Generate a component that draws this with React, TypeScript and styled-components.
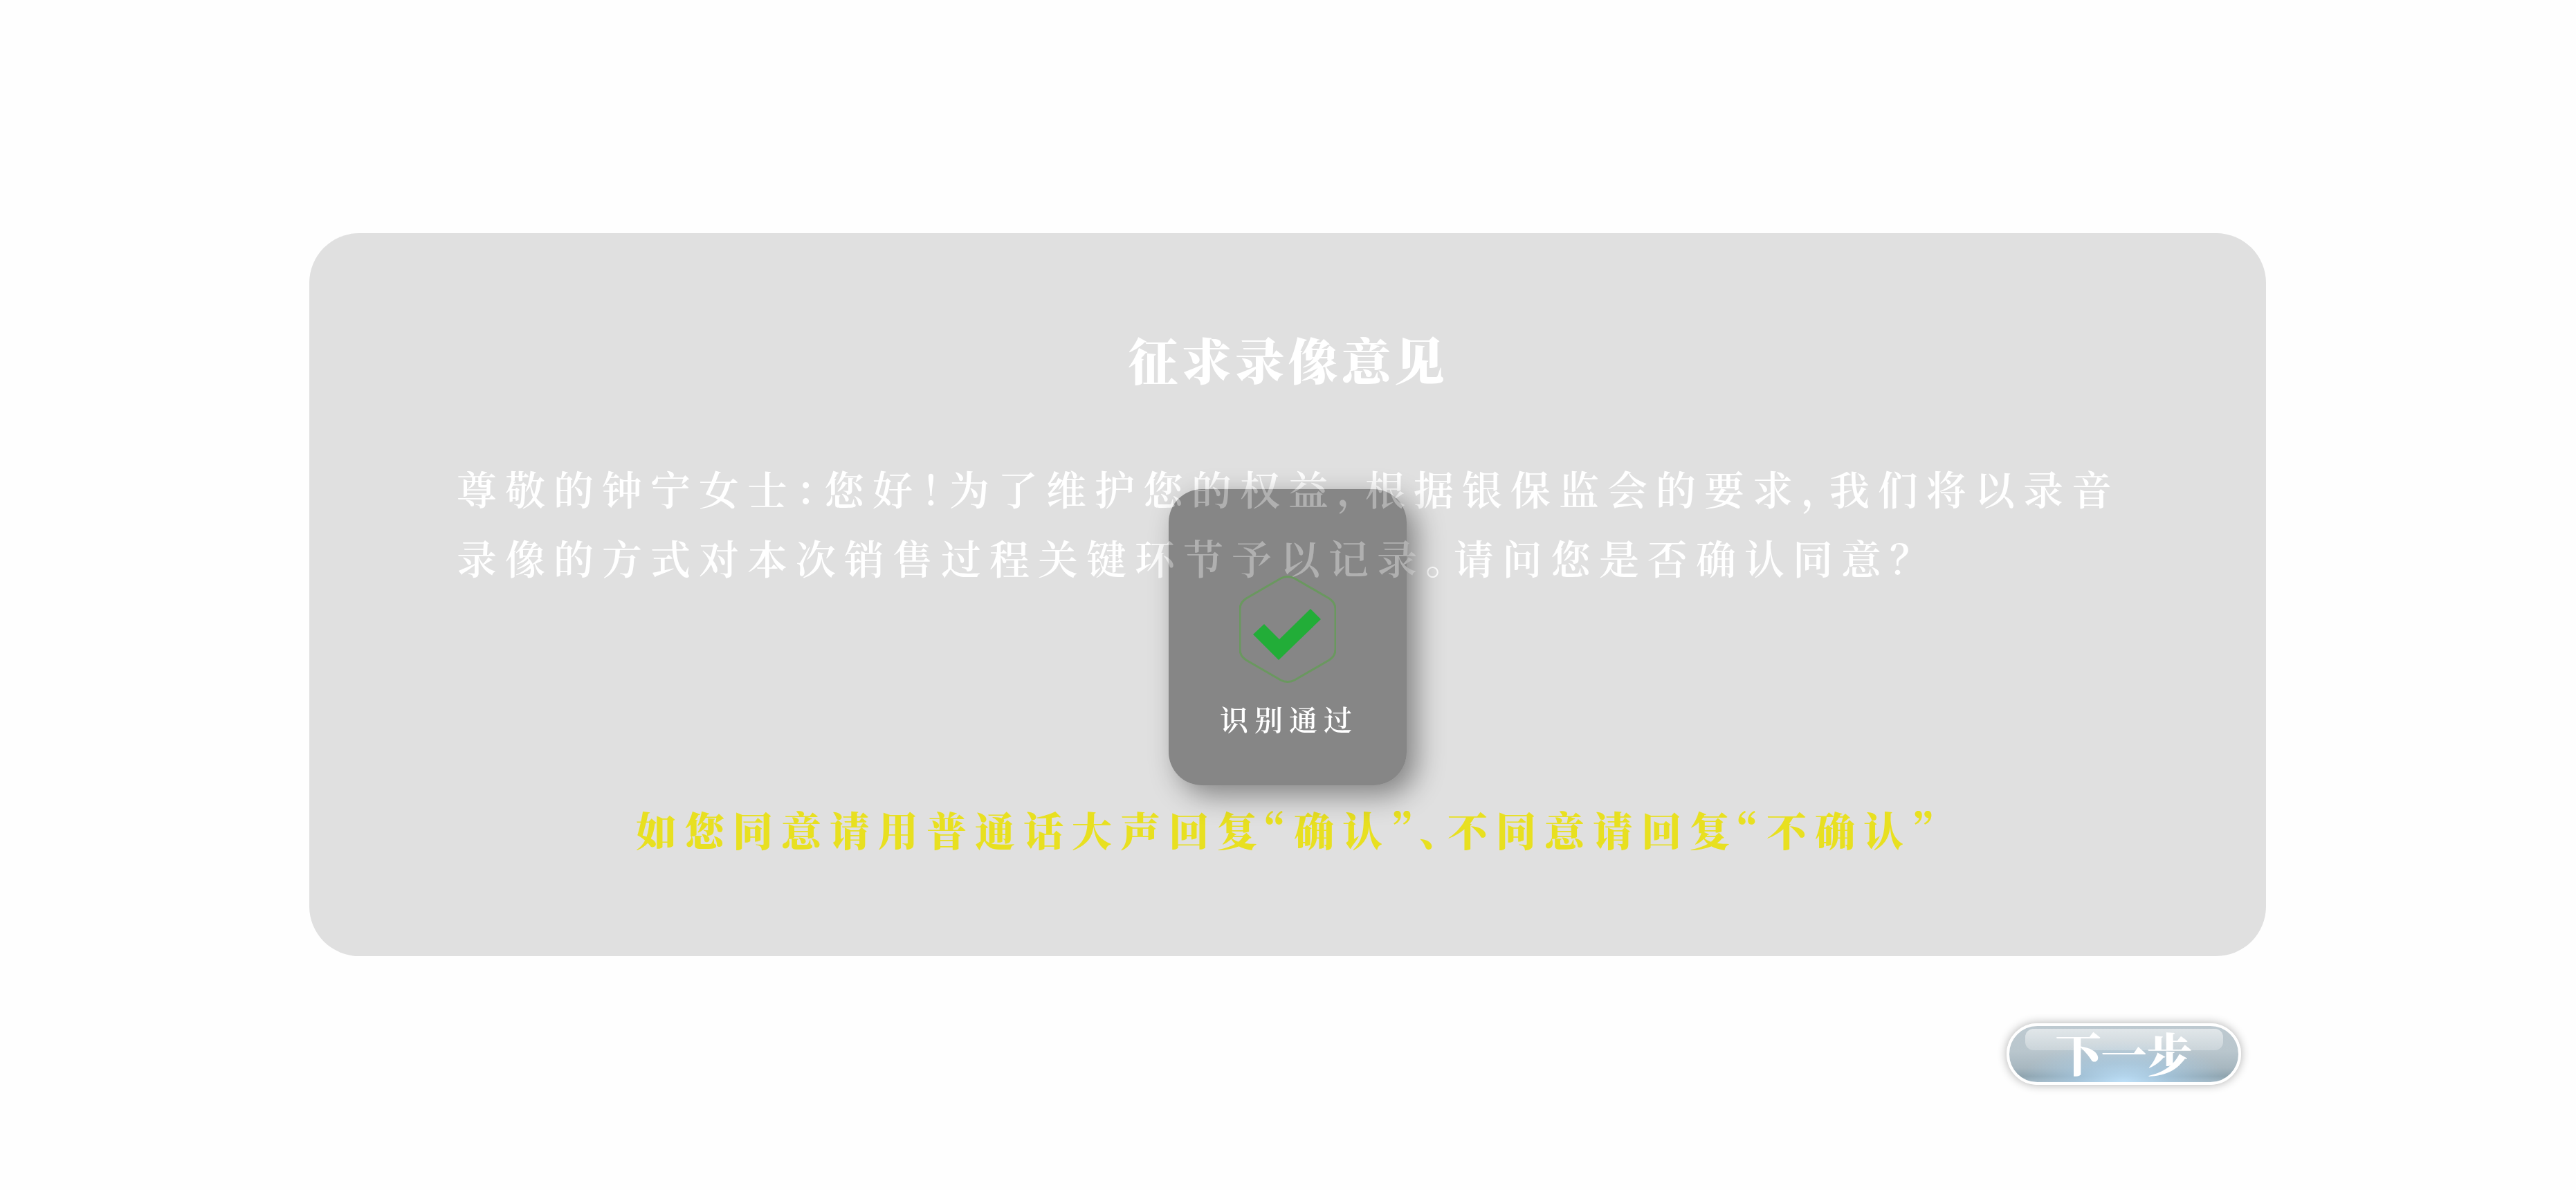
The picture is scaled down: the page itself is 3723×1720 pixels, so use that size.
import React from "react";
import styled, { createGlobalStyle } from "styled-components";

const Global = createGlobalStyle`
  html, body { margin: 0; padding: 0; background: #fefefe; }
  #root { min-height: 1720px; }
`;
const serif = `"Noto Serif CJK SC", "Source Han Serif SC", "AR PL UMing CN", "Liberation Serif", "Noto Sans CJK SC", serif`;

const Page = styled.main`
  box-sizing: border-box;
  width: 3723px;
  height: 1720px;
  padding: 337px 448px 0 447px;
  display: flex;
  flex-direction: column;
  font-family: ${serif};
  overflow: hidden;
`;
const Card = styled.section`
  position: relative;
  box-sizing: border-box;
  width: 2828px;
  height: 1045px;
  padding: 133px 212px 0 213px;
  background: #e0e0e0;
  border-radius: 72px;
  color: #fff;
`;
const Title = styled.h1`
  margin: 0;
  font-size: 72px;
  line-height: 96px;
  font-weight: 900;
  letter-spacing: 5px;
  text-align: center;
`;
const Body = styled.p`
  margin: 89px -60px 0 0;
  font-size: 58px;
  line-height: 100px;
  font-weight: 600;
  letter-spacing: 12px;
  font-feature-settings: "halt";
  text-spacing-trim: space-all;
`;
const Prompt = styled.p`
  margin: 303px -100px 0;
  font-size: 58px;
  line-height: 80px;
  font-weight: 900;
  letter-spacing: 12px;
  color: #e8e020;
  text-align: center;
  white-space: nowrap;
  font-feature-settings: "halt";
  text-spacing-trim: space-all;
`;
const Toast = styled.div`
  position: absolute;
  left: 1242px;
  top: 370px;
  box-sizing: border-box;
  width: 344px;
  height: 428px;
  padding-top: 125px;
  display: flex;
  flex-direction: column;
  align-items: center;
  gap: 32px;
  backdrop-filter: brightness(0.5) contrast(1.94) brightness(1.38);
  border-radius: 48px;
  box-shadow: 14px 14px 40px rgba(0, 0, 0, 0.42);
`;
const ToastLabel = styled.span`
  font-size: 41px;
  line-height: 40px;
  font-weight: 600;
  letter-spacing: 9px;
  color: #fff;
  transform: translateX(2px);
`;
const Footer = styled.div`
  display: flex;
  justify-content: flex-end;
  padding: 97px 36px 0 0;
`;
const NextButton = styled.button`
  position: relative;
  box-sizing: border-box;
  width: 339px;
  height: 89px;
  padding: 0;
  border: 4px solid #fff;
  border-radius: 45px;
  font-family: ${serif};
  font-size: 66px;
  line-height: 70px;
  font-weight: 900;
  color: #fff;
  background:
    radial-gradient(ellipse 150px 60px at 50% 100%, rgba(190, 225, 250, 0.95) 0%, rgba(170, 205, 230, 0.7) 45%, rgba(170, 205, 230, 0) 100%),
    linear-gradient(to bottom, #bdc9d0 0%, #b9c6cd 45%, #a7b7c0 75%, #8ea3ae 90%, #a3b6c1 100%);
  box-shadow: 0 0 14px rgba(0, 0, 0, 0.32);
`;
const Gloss = styled.span`
  position: absolute;
  left: 23px;
  right: 22px;
  top: 4px;
  height: 31px;
  border-radius: 12px;
  background: linear-gradient(to bottom, rgba(255, 255, 255, 0.55), rgba(255, 255, 255, 0.25));
`;
const ButtonText = styled.span`
  position: relative;
  display: block;
  margin-top: -6px;
`;

const PassIcon = () => (
  <svg width="140" height="155" viewBox="0 0 140 155" aria-hidden="true">
    <path
      d="M60 4 Q70 -1 80 4 L130 33 Q139 39 139 48 L139 107 Q139 116 130 122 L80 151 Q70 156 60 151 L10 122 Q1 116 1 107 L1 48 Q1 39 10 33 Z"
      fill="none"
      stroke="#6a985f"
      strokeWidth="3"
    />
    <path d="M20 85 L36 70 L58 92 L103 48 L118 63 L57 122 Z" fill="#22ad38" />
  </svg>
);

export default function App() {
  return (
    <Page>
      <Global />
      <Card>
        <Title>征求录像意见</Title>
        <Body>
          尊敬的钟宁女士：您好！为了维护您的权益，根据银保监会的要求，我们将以录音录像的方式对本次销售过程关键环节予以记录。请问您是否确认同意？
        </Body>
        <Prompt>如您同意请用普通话大声回复“确认”、不同意请回复“不确认”</Prompt>
        <Toast>
          <PassIcon />
          <ToastLabel>识别通过</ToastLabel>
        </Toast>
      </Card>
      <Footer>
        <NextButton type="button">
          <Gloss />
          <ButtonText>下一步</ButtonText>
        </NextButton>
      </Footer>
    </Page>
  );
}
